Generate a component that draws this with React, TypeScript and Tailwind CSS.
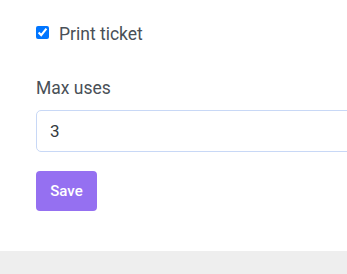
import { useState } from "react";

/**
 * 티켓 설정 폼
 */
const App = () => {
  const [printTicket, setPrintTicket] = useState(true);
  const [maxUses, setMaxUses] = useState("3");

  return (
    <div className="flex min-h-[274px] w-full flex-col overflow-hidden bg-white font-['Roboto','Liberation_Sans',sans-serif] text-[#495057]">
      <div className="flex flex-col px-[36px] pt-[20px] pb-[40px]">
        <label className="flex h-[24px] items-start gap-[10px] text-[17.5px] leading-[24px]">
          <input
            type="checkbox"
            className="m-0 mt-[6px] h-[13px] w-[13px] accent-[#0075ff]"
            checked={printTicket}
            onChange={(e) => setPrintTicket(e.target.checked)}
          />
          <span className="mt-[2px]">Print ticket</span>
        </label>
        <div className="mt-[32px] h-[24px] text-[17.5px] leading-[24px]">Max uses</div>
        <input
          className="mt-[10px] h-[42px] w-[400px] min-w-[400px] rounded-[5px] border border-[#c8d8f6] bg-white px-[13px] text-[17px] text-[#343a40] outline-none"
          value={maxUses}
          onChange={(e) => setMaxUses(e.target.value)}
        />
        <button className="mt-[19px] flex h-[40px] w-[61px] items-center justify-center rounded-[4px] bg-[#9570f1] text-[15px] font-medium text-white">
          Save
        </button>
      </div>
      <div className="flex-grow bg-[#eeeeee]" />
    </div>
  );
};

export default App;
